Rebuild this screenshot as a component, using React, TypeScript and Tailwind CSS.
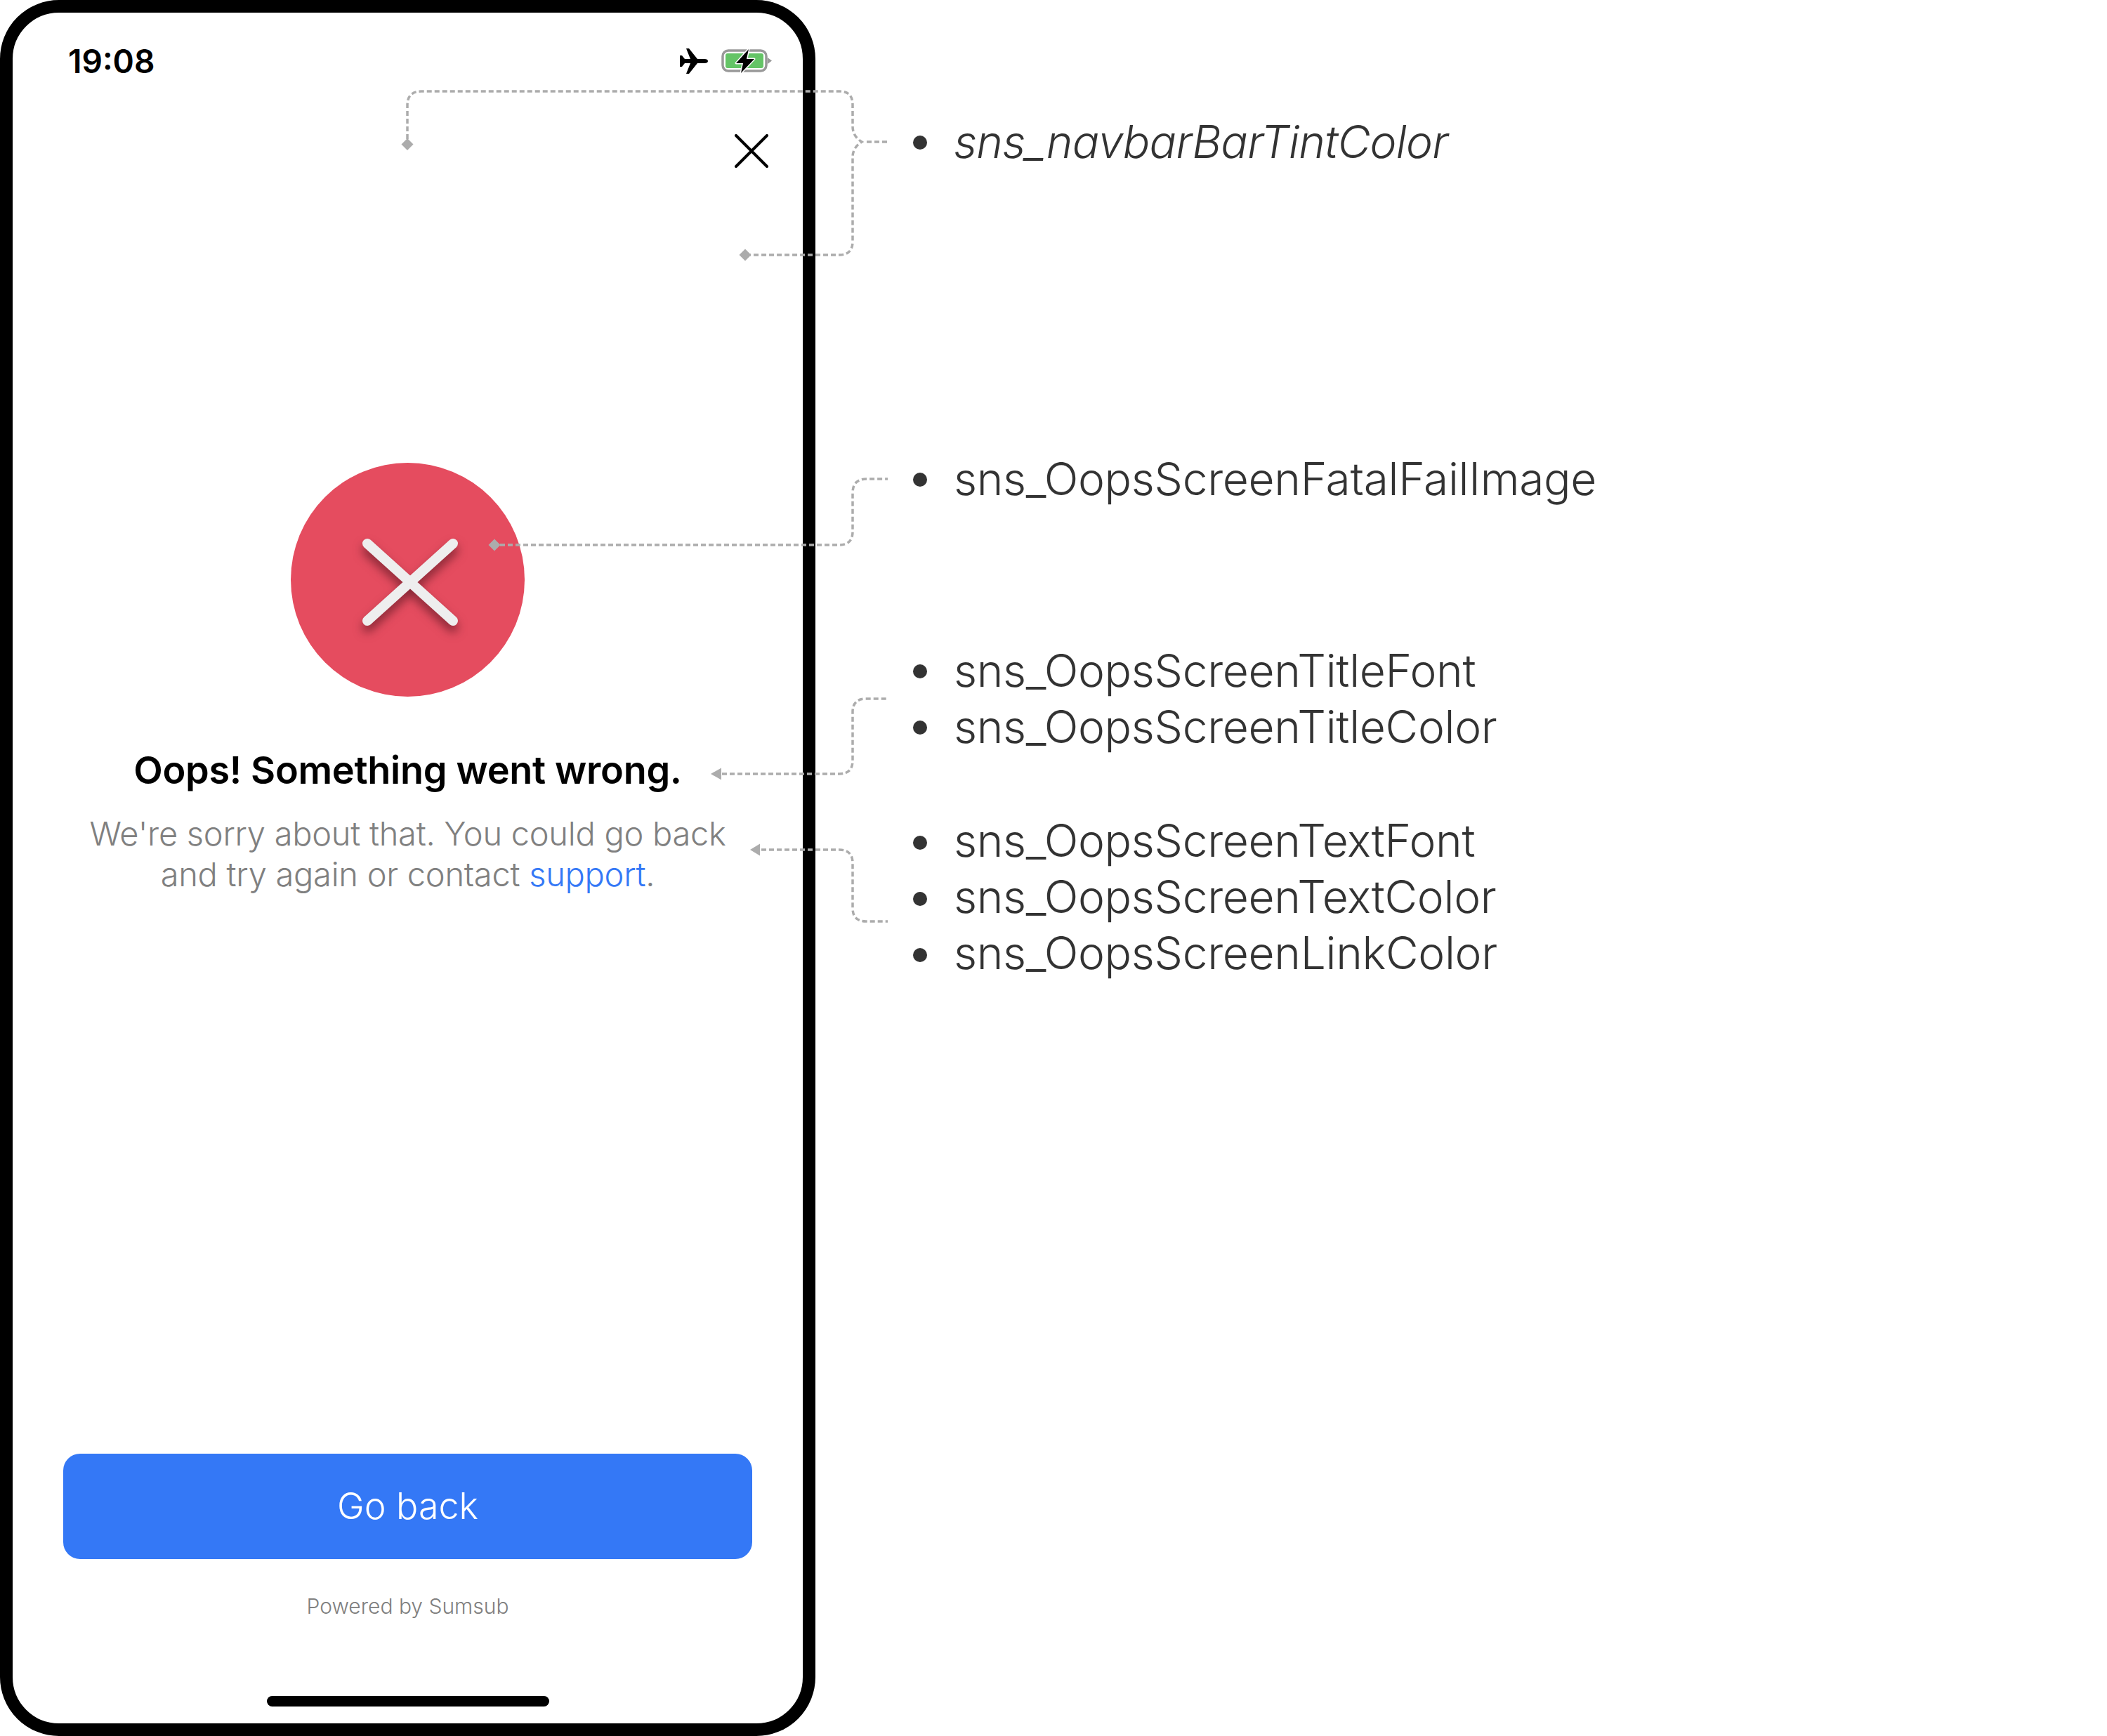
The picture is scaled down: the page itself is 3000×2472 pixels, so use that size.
import React from 'react';

const SANS = 'font-["Inter","Liberation_Sans",sans-serif]';

const AirplaneIcon = () => (
  <svg width="40" height="36" viewBox="0 0 40 36" aria-hidden="true">
    <path d="M40 18c0 2-2 3-5 3H25L13 36H9l6-15H7l-4 5H0V10h3l4 5h8L9 0h4l12 15h10c3 0 5 1 5 3z" fill="#000" />
  </svg>
);

const BatteryIcon = () => (
  <svg width="73" height="34" viewBox="0 0 73 34" aria-hidden="true" className="overflow-visible">
    <rect x="2" y="2" width="62" height="29" rx="8" fill="none" stroke="#999999" strokeWidth="3.500" />
    <rect x="6" y="6" width="54" height="21" rx="3" fill="#64c466" />
    <path d="M66 12l6 4.500-6 4.500z" fill="#999999" />
    <path d="M39 0L21 20h10l-3 14 19-20H36z" fill="#000" stroke="#fff" strokeWidth="3" paintOrder="stroke" strokeLinejoin="round" />
  </svg>
);

const CloseIcon = () => (
  <svg width="48" height="48" viewBox="0 0 48 48" aria-hidden="true">
    <path d="M2 2l44 44M46 2L2 46" stroke="#000" strokeWidth="4" strokeLinecap="round" />
  </svg>
);

const FailImage = () => (
  <div className="flex h-[333px] w-[333px] items-center justify-center rounded-full bg-[#e54c5f]">
    <svg width="150" height="150" viewBox="0 0 150 150" aria-hidden="true" className="ml-[6px] mt-[6px] overflow-visible drop-shadow-[0_9px_7px_rgba(70,15,25,0.6)]">
      <path d="M14 20l122 110M136 20L14 130" stroke="#eeeeee" strokeWidth="14" strokeLinecap="round" />
    </svg>
  </div>
);

const Phone = () => (
  <div className="flex h-[2472px] w-[1161px] shrink-0 flex-col rounded-[84px] border-[18px] border-black bg-white">
    {/* Status bar */}
    <div className="flex h-[138px] shrink-0 items-center justify-between pl-[79px] pr-[43px]">
      <span className="text-[46px] font-semibold leading-none text-black">19:08</span>
      <div className="flex items-center gap-[19px]">
        <AirplaneIcon />
        <BatteryIcon />
      </div>
    </div>

    {/* Navbar */}
    <div className="flex h-[118px] shrink-0 items-center justify-end pr-[49px]">
      <CloseIcon />
    </div>

    {/* Message */}
    <div className="mt-[385px] flex flex-col items-center">
      <FailImage />
      <h1 className="mt-[70px] text-[54px] font-semibold leading-[70px] tracking-[-0.3px] text-black">Oops! Something went wrong.</h1>
      <p className="mt-[26px] text-center text-[47px] font-light leading-[58px] tracking-[-0.27px] text-[#808080]">
        We're sorry about that. You could go back
        <br />
        and try again or contact <span className="text-[#3478f6]">support</span>.
      </p>
    </div>

    {/* Footer */}
    <div className="mt-auto flex flex-col items-center pb-[24px]">
      <button className="flex h-[150px] w-[981px] items-center justify-center rounded-[24px] bg-[#3478f6] text-[52px] font-light text-white">
        Go back
      </button>
      <span className="mt-[48px] text-[30px] font-light leading-[38px] text-[#808080]">Powered by Sumsub</span>
      <div className="mt-[109px] h-[15px] w-[402px] rounded-full bg-black" />
    </div>
  </div>
);

const groups = [
  { top: 'mt-[163px]', nudge: 'pb-[2px]', items: ['sns_navbarBarTintColor'], italic: true },
  { top: 'mt-[400px]', nudge: 'pb-[2px]', items: ['sns_OopsScreenFatalFailImage'] },
  { top: 'mt-[193px]', nudge: 'pb-[3px]', items: ['sns_OopsScreenTitleFont', 'sns_OopsScreenTitleColor'] },
  { top: 'mt-[84px]', nudge: 'pb-[7px]', items: ['sns_OopsScreenTextFont', 'sns_OopsScreenTextColor', 'sns_OopsScreenLinkColor'] },
];

const Legend = () => (
  <div className="flex flex-col pl-[139px]">
    {groups.map((group) => (
      <ul key={group.items[0]} className={group.top}>
        {group.items.map((item) => (
          <li key={item} className="flex h-[80px] items-center gap-[38px]">
            <span className="h-[20px] w-[20px] shrink-0 rounded-full bg-[#333333]" />
            <span className={`${group.nudge} text-[64px] font-[350] leading-none text-[#333333] ${group.italic ? 'italic tracking-[-0.7px]' : 'tracking-[-0.3px]'}`}>{item}</span>
          </li>
        ))}
      </ul>
    ))}
  </div>
);

// Dashed callouts run over the phone frame, so they sit on top of everything
const Callouts = () => (
  <svg className="pointer-events-none absolute left-0 top-0" width="3000" height="2472" viewBox="0 0 3000 2472" aria-hidden="true">
    <g fill="none" stroke="#acacac" strokeWidth="3.500" strokeDasharray="7 4">
      <path d="M580 198V150Q580 130 600 130H1195Q1214 130 1214 149V180Q1214 194 1227 202Q1214 210 1214 224V344Q1214 363 1195 363H1068" />
      <path d="M1234 202H1264" />
      <path d="M712 776H1195Q1214 776 1214 757V702Q1214 682 1234 682H1264" />
      <path d="M1028 1102H1195Q1214 1102 1214 1083V1014Q1214 995 1233 995H1264" />
      <path d="M1084 1210H1195Q1214 1210 1214 1229V1293Q1214 1312 1233 1312H1264" />
    </g>
    <g fill="#acacac">
      <path d="M580 197l8.500 8.500-8.500 8.500-8.500-8.500z" />
      <path d="M1061 354.500l8.500 8.500-8.500 8.500-8.500-8.500z" />
      <path d="M704 767.500l8.500 8.500-8.500 8.500-8.500-8.500z" />
      <path d="M1012 1102l15-8.500v17z" />
      <path d="M1068 1210l14-8.500v17z" />
    </g>
  </svg>
);

export default function App() {
  return (
    <div className={`relative flex h-[2472px] w-[3000px] overflow-hidden bg-white ${SANS}`}>
      <Phone />
      <Legend />
      <Callouts />
    </div>
  );
}
